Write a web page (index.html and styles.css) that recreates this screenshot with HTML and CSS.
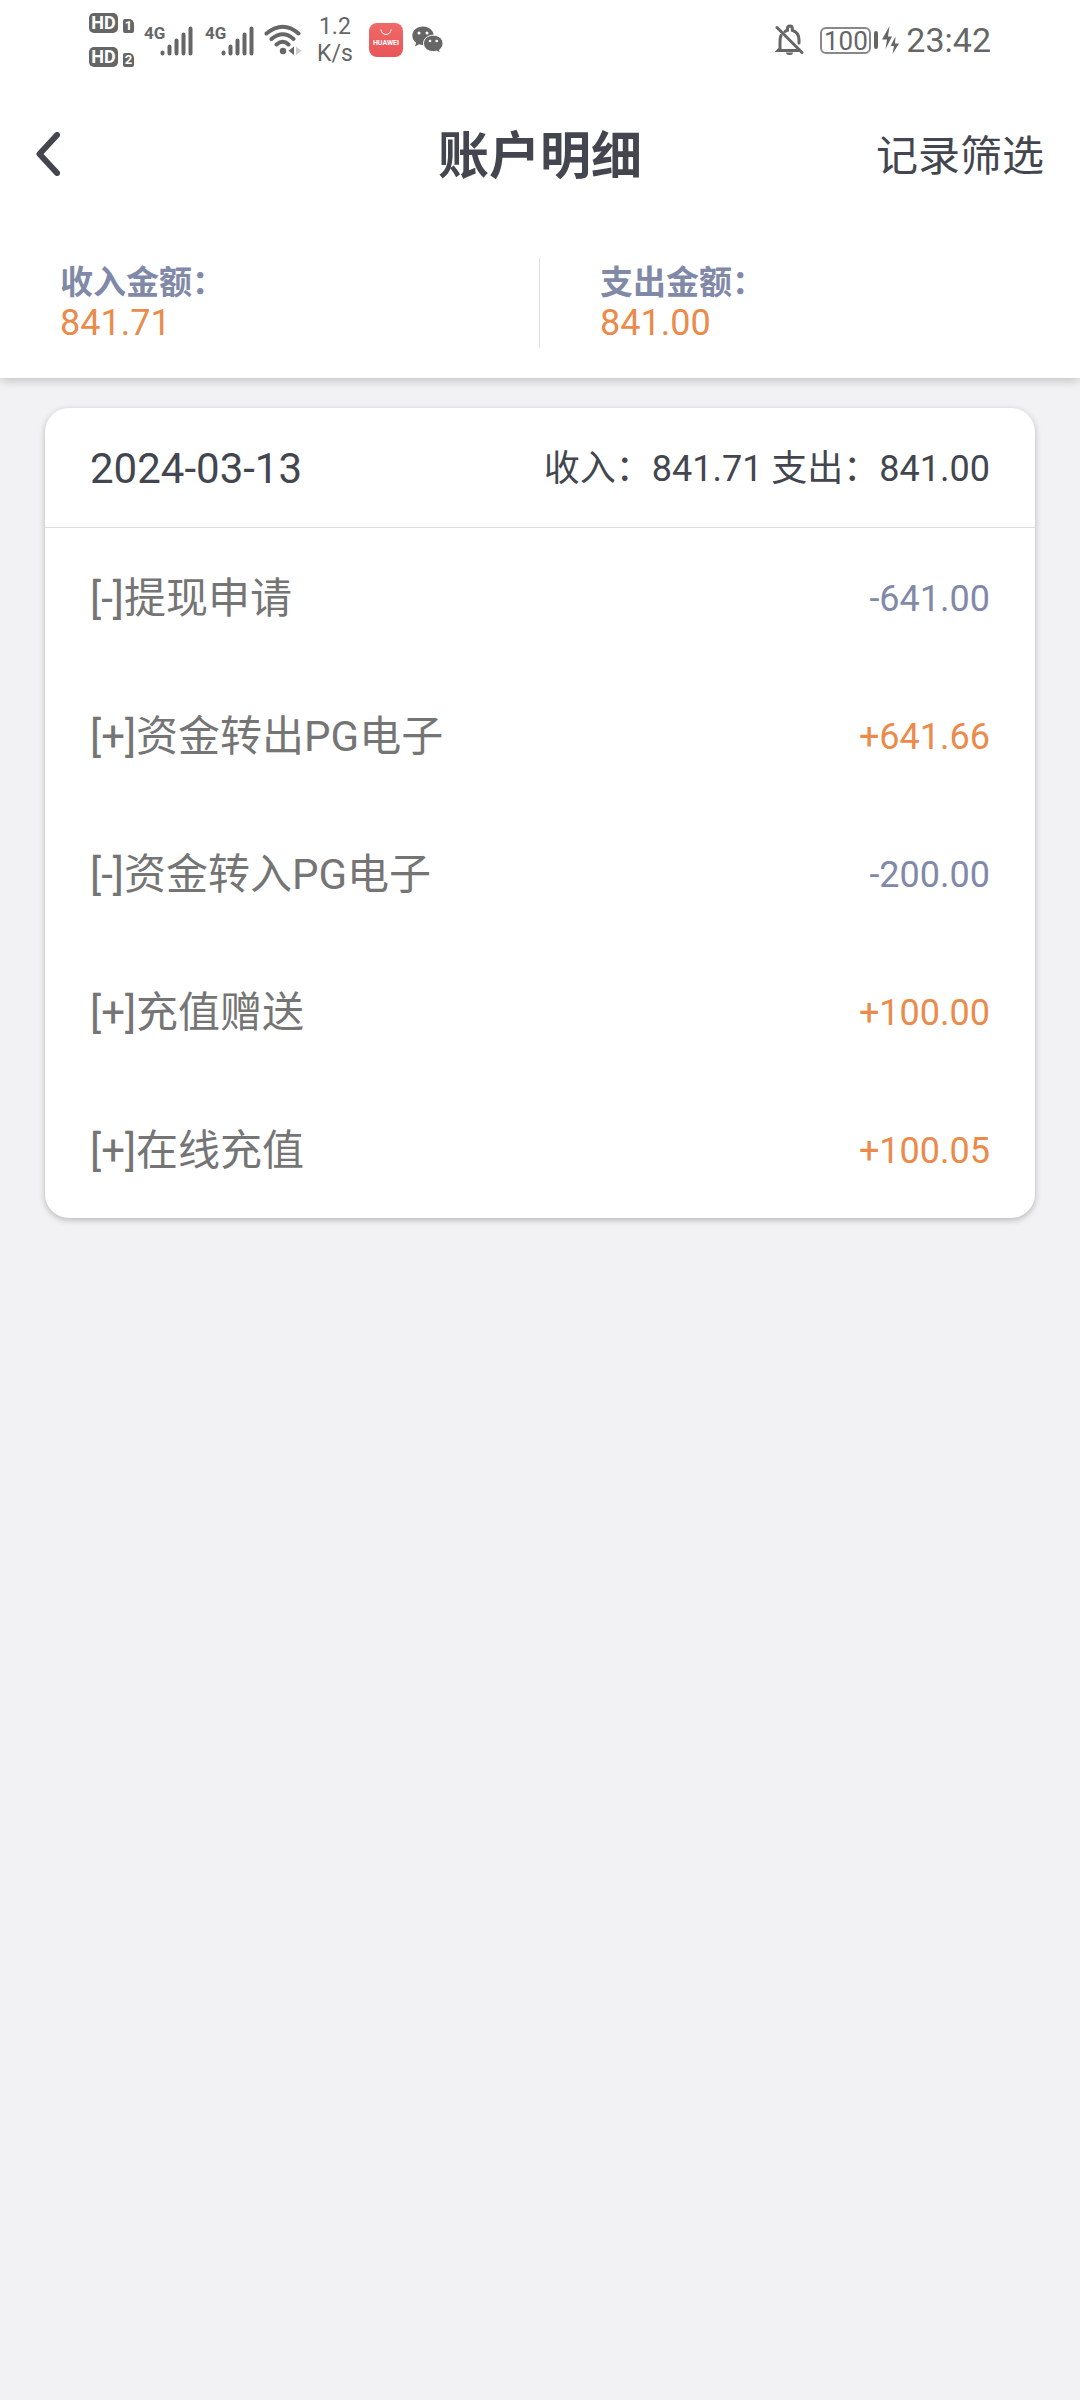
FILE: index.html
```html
<!DOCTYPE html>
<html lang="zh-CN">
<head>
  <meta charset="utf-8">
  <meta name="viewport" content="width=device-width, initial-scale=1">
  <title>账户明细</title>
  <link rel="stylesheet" href="styles.css">
</head>
<body>
  <header class="top">
    <div class="status">
      <div class="status-group">
        <div class="sims">
          <div class="sim"><span class="hd">HD</span><span class="slot">1</span></div>
          <div class="sim"><span class="hd">HD</span><span class="slot">2</span></div>
        </div>
        <div class="signal">
          <span class="net">4G</span>
          <svg class="bars" viewBox="0 0 34 32" aria-hidden="true">
            <path d="M2.5 28.500v1M9.500 22.500v7M16.500 16.500v13M23.500 10.500v19M30.500 4.500v25"/>
          </svg>
        </div>
        <div class="signal">
          <span class="net">4G</span>
          <svg class="bars" viewBox="0 0 34 32" aria-hidden="true">
            <path d="M2.5 28.500v1M9.500 22.500v7M16.500 16.500v13M23.500 10.500v19M30.500 4.500v25"/>
          </svg>
        </div>
        <svg class="wifi" viewBox="0 0 38 32" aria-hidden="true">
          <path class="line" d="M2.500 9.500Q19 -4 34.500 9.500M7.500 15Q19 5.500 29.500 15M12.500 20.500Q19 15 24.500 20.500"/>
          <circle cx="19" cy="27" r="3.200"/>
          <path d="M30 22.500v8.500l-5.500-4.250z"/>
          <path class="faint" d="M32 22.500v8.500l5.500-4.250z"/>
        </svg>
        <div class="speed"><span>1.2</span><span>K/s</span></div>
        <div class="huawei">
          <svg class="smile" viewBox="0 0 14 8" aria-hidden="true"><path d="M2 1.500a5 5 0 0 0 10 0"/></svg>
          <span>HUAWEI</span>
        </div>
        <svg class="wechat" viewBox="0 0 32 28" aria-hidden="true">
          <path d="M11 .5C5 .5.300 4.600.300 9.800c0 2.900 1.500 5.300 3.800 7L3 20.500l4-2.200c1.300.400 2.600.600 4 .600 6 0 10.700-4.100 10.700-9.200C21.700 4.600 17 .5 11 .5z"/>
          <path class="front" d="M21.300 9.200c-5.500 0-9.800 3.600-9.800 8.200s4.300 8.200 9.800 8.200c1.200 0 2.300-.200 3.300-.500l3.800 2-.900-3.300c2.200-1.500 3.500-3.800 3.500-6.400 0-4.600-4.200-8.200-9.700-8.200z"/>
          <g class="eyes"><circle cx="7" cy="7" r="1.500"/><circle cx="15" cy="7" r="1.500"/><circle cx="18" cy="15" r="1.300"/><circle cx="24.700" cy="15" r="1.300"/></g>
        </svg>
      </div>
      <div class="status-group">
        <svg class="bell" viewBox="0 0 30 32" aria-hidden="true">
          <path class="line" d="M6 11.500Q5 13.500 5 17v7.500L3 26.500h21M10 7.500q1.500-1 2.500-1.200V4.500a2.400 2.400 0 0 1 4.800 0v1.800Q24 8.500 24 16v3"/>
          <path class="line" d="M2 3.500l25 25"/>
          <path d="M11 28.500h7a3.500 2.500 0 0 1-7 0z"/>
        </svg>
        <div class="battery"><span class="level">100</span><span class="nub"></span></div>
        <svg class="bolts" viewBox="0 0 18 28" aria-hidden="true">
          <path d="M7.500 0L0 13.500h5L3.500 23 10 10.500H6z"/>
          <path d="M13.500 10.500L8.500 20h3.500l-1.500 8L17 17.500h-4z"/>
        </svg>
        <time class="clock">23:42</time>
      </div>
    </div>

    <nav class="nav">
      <button class="back" type="button" aria-label="返回">
        <svg viewBox="0 0 24 44" aria-hidden="true"><path d="M21 3L3.500 22 21 41"/></svg>
      </button>
      <h1 class="title">账户明细</h1>
      <button class="filter" type="button">记录筛选</button>
    </nav>

    <dl class="totals">
      <div class="total"><dt>收入金额：</dt><dd>841.71</dd></div>
      <div class="total"><dt>支出金额：</dt><dd>841.00</dd></div>
    </dl>
  </header>

  <main class="content">
    <section class="card">
      <div class="card-head">
        <h2 class="date">2024-03-13</h2>
        <p class="sum">收入：841.71 支出：841.00</p>
      </div>
      <ul class="records">
        <li class="record"><span>[-]提现申请</span><span class="amount out">-641.00</span></li>
        <li class="record"><span>[+]资金转出PG电子</span><span class="amount in">+641.66</span></li>
        <li class="record"><span>[-]资金转入PG电子</span><span class="amount out">-200.00</span></li>
        <li class="record"><span>[+]充值赠送</span><span class="amount in">+100.00</span></li>
        <li class="record"><span>[+]在线充值</span><span class="amount in">+100.05</span></li>
      </ul>
    </section>
  </main>
</body>
</html>
```

FILE: styles.css
```css
:root {
  --ink: #43464f;
  --muted: #8189a8;
  --accent: #ea8b4c;
  --text: #757575;
  --icon: #666;
  --line: #dedfe0;
}

* {
  box-sizing: border-box;
  margin: 0;
  padding: 0;
}

body {
  min-height: 100vh;
  background: #f2f2f4;
  color: var(--ink);
  font-family: Roboto, "Noto Sans CJK SC", sans-serif;
}

button {
  border: 0;
  background: none;
  color: inherit;
  font: inherit;
  cursor: pointer;
}

svg {
  display: block;
  fill: var(--icon);
}

.top {
  background: #fff;
  box-shadow: 0 2px 10px rgba(0, 0, 0, 0.22);
}

/* Status bar */
.status {
  display: flex;
  justify-content: space-between;
  align-items: center;
  height: 80px;
  padding: 0 89px;
  color: var(--icon);
}

.status-group {
  display: flex;
  align-items: center;
}

.sims {
  display: grid;
  gap: 14px;
}

.sim {
  display: flex;
  align-items: flex-end;
  gap: 5px;
}

.hd,
.slot {
  background: var(--icon);
  color: #fff;
  text-align: center;
  font-weight: 700;
}

.hd {
  width: 29px;
  height: 20px;
  border-radius: 5px;
  font-size: 18px;
  line-height: 20px;
}

.slot {
  width: 11px;
  height: 14px;
  border-radius: 2px 5px 2px 2px;
  font-size: 13px;
  line-height: 14px;
}

.signal {
  display: flex;
  align-items: flex-start;
  width: 51px;
  margin-left: 10px;
}

.net {
  width: 16px;
  font: 700 17px/18px "Liberation Sans Narrow", Roboto, sans-serif;
}

.bars {
  flex: none;
  width: 34px;
  height: 32px;
}

.bars path,
.wifi .line,
.bell .line {
  fill: none;
  stroke: var(--icon);
  stroke-width: 4;
  stroke-linecap: round;
}

.wifi {
  width: 38px;
  height: 32px;
  margin-left: 8px;
}

.wifi .faint {
  fill: #ccc;
}

.speed {
  display: grid;
  width: 34px;
  margin-left: 15px;
  font-size: 23px;
  line-height: 27px;
  text-align: center;
}

.huawei {
  display: grid;
  justify-items: center;
  align-content: start;
  gap: 2px;
  width: 34px;
  height: 34px;
  margin-left: 18px;
  padding-top: 5px;
  border-radius: 8px;
  background: linear-gradient(#ee6a68, #ea5458);
  color: #fff;
  font-size: 7px;
  font-weight: 700;
  line-height: 10px;
}

.smile {
  width: 14px;
  height: 8px;
}

.smile path {
  fill: none;
  stroke: #fff;
  stroke-width: 1;
}

.wechat {
  width: 32px;
  height: 28px;
  margin-left: 9px;
}

.wechat .front {
  stroke: #fff;
  stroke-width: 1;
}

.wechat .eyes {
  fill: #fff;
}

.bell {
  width: 30px;
  height: 32px;
}

.bell .line {
  stroke-width: 3;
}

.battery {
  display: flex;
  align-items: center;
  gap: 3px;
  margin-left: 15px;
}

.level {
  width: 51px;
  height: 27px;
  border: 2px solid #888;
  border-radius: 6px;
  font-size: 26px;
  line-height: 24px;
  text-align: center;
}

.nub {
  width: 4px;
  height: 18px;
  border-radius: 2px;
  background: var(--icon);
}

.bolts {
  width: 18px;
  height: 28px;
  margin-left: 4px;
}

.clock {
  margin-left: 6px;
  font-size: 34px;
  line-height: 40px;
}

/* Title bar */
.nav {
  display: grid;
  grid-template-columns: 1fr auto 1fr;
  align-items: center;
  height: 148px;
  padding: 0 36px;
}

.back {
  justify-self: start;
}

.back svg {
  width: 24px;
  height: 44px;
  fill: none;
  stroke: var(--ink);
  stroke-width: 6;
  stroke-linecap: round;
  stroke-linejoin: round;
}

.title,
.filter {
  padding-top: 6px;
  line-height: 60px;
}

.title {
  font-size: 51px;
  font-weight: 700;
}

.filter {
  justify-self: end;
  font-size: 42px;
}

/* Income and expense totals */
.totals {
  display: grid;
  grid-template-columns: 1fr 1fr;
  padding: 30px 0;
}

.total {
  padding: 4px 60px;
  line-height: 41px;
}

.total:first-child {
  border-right: 1px solid var(--line);
}

.total dt {
  color: var(--muted);
  font-size: 33px;
  font-weight: 700;
}

.total dd {
  color: var(--accent);
  font-size: 36px;
}

/* Daily record card */
.content {
  padding: 30px 45px;
}

.card {
  border-radius: 24px;
  background: #fff;
  box-shadow: 0 2px 6px rgba(0, 0, 0, 0.25);
}

.card-head,
.record {
  display: flex;
  justify-content: space-between;
  align-items: center;
  padding: 3px 45px 0;
  line-height: 60px;
}

.card-head {
  height: 120px;
  border-bottom: 1px solid var(--line);
}

.date,
.record {
  font-size: 42px;
  font-weight: 400;
}

.sum,
.amount {
  font-size: 36px;
}

.records {
  list-style: none;
}

.record {
  height: 138px;
  color: var(--text);
}

.amount.in {
  color: var(--accent);
}

.amount.out {
  color: var(--muted);
}
```
